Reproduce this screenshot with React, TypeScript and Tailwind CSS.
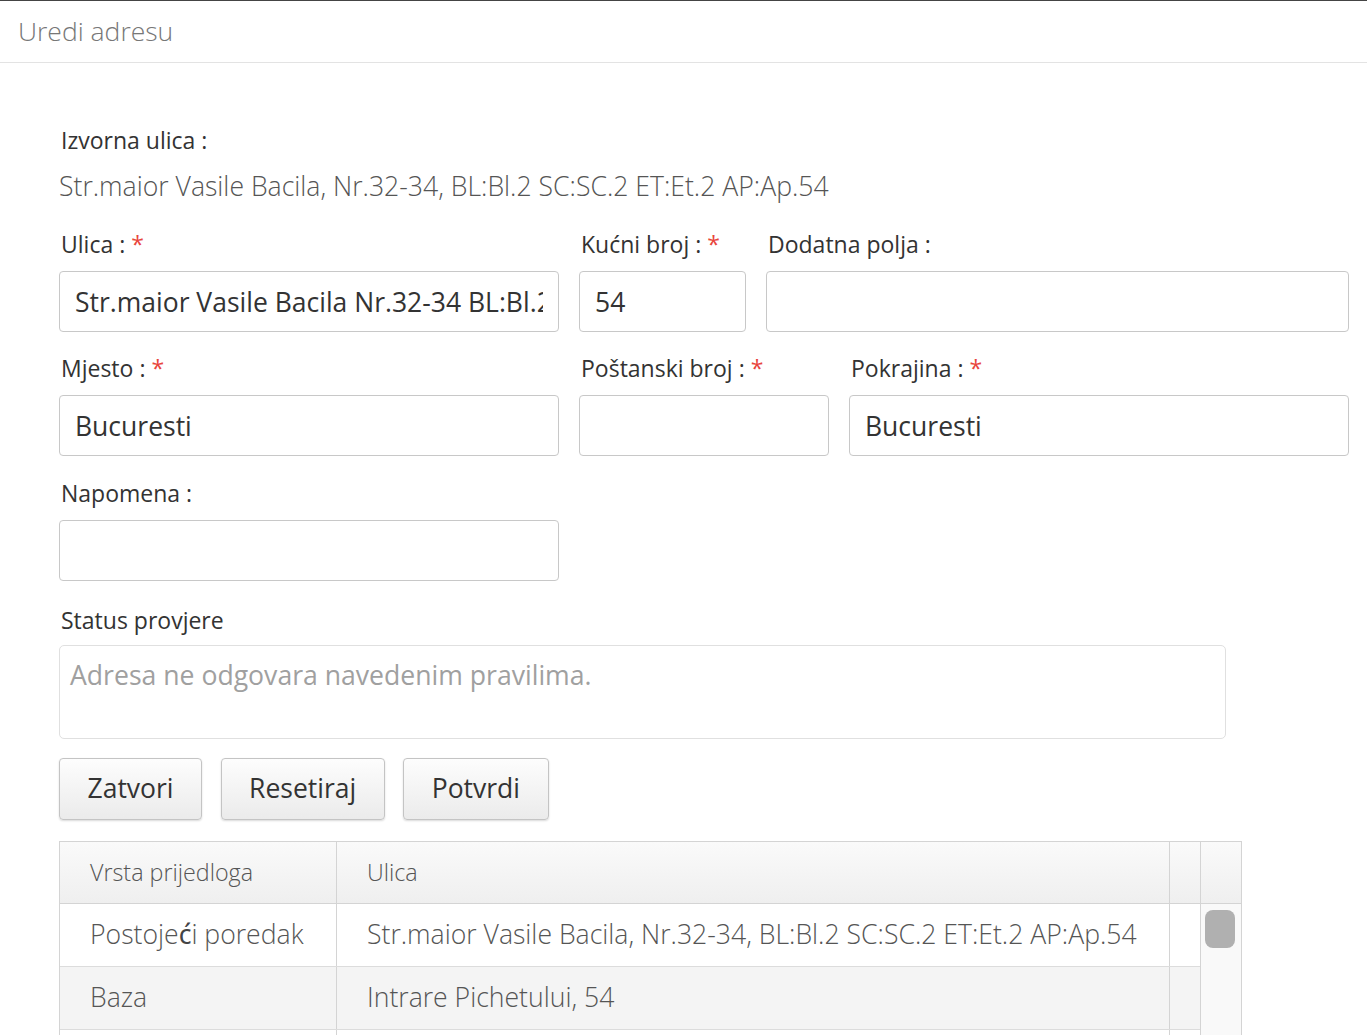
import React from 'react';

const Req: React.FC = () => <span className="text-[#e8453c]">*</span>;

const Label: React.FC<{ text: string; required?: boolean }> = ({ text, required }) => (
  <div className="h-[30px] leading-[30px] text-[23px] text-[#333] pl-[2px] whitespace-nowrap">
    {text} {required && <Req />}
  </div>
);

const Field: React.FC<{ label: string; required?: boolean; value?: string; width: string }> = ({ label, required, value = '', width }) => (
  <div className={`flex flex-col ${width}`}>
    <Label text={label} required={required} />
    <input
      readOnly
      defaultValue={value}
      className="mt-[12px] h-[61px] w-full rounded-[4px] border border-[#c8c8c8] bg-white px-[15px] text-[26.5px] text-[#333] outline-none font-['Open_Sans',sans-serif]"
    />
  </div>
);

const Btn: React.FC<{ children: React.ReactNode }> = ({ children }) => (
  <button className="h-[62px] rounded-[4px] border border-[#c4c4c4] bg-gradient-to-b from-[#fdfdfd] to-[#ebebeb] px-[27.5px] text-[26.5px] text-[#333] shadow-[0_1px_2px_rgba(0,0,0,0.15)]">
    {children}
  </button>
);

const rows = [
  { type: <>Postoje<span className="font-['Noto_Sans',sans-serif] font-normal text-[#444]">ć</span>i poredak</>, street: 'Str.maior Vasile Bacila, Nr.32-34, BL:Bl.2 SC:SC.2 ET:Et.2 AP:Ap.54', bg: 'bg-white' },
  { type: <>Baza</>, street: 'Intrare Pichetului, 54', bg: 'bg-[#f4f4f4]' },
  { type: <></>, street: '', bg: 'bg-white' },
];

export default function App() {
  return (
    <div className="min-h-screen bg-white font-['Open_Sans',sans-serif]">
      <header className="h-[63px] border-t border-b border-t-[#444] border-b-[#e3e3e3] pl-[18px] pt-[10px]">
        <h1 className="text-[26.5px] font-light leading-[40px] text-[#777]">Uredi adresu</h1>
      </header>

      <main className="pl-[59px] pr-[18px] pt-[62px]">
        <div className="h-[30px] leading-[30px] text-[23px] text-[#333] pl-[2px]">Izvorna ulica :</div>
        <div className="mt-[13px] h-[36px] leading-[36px] text-[26.6px] font-light text-[#555]">
          Str.maior Vasile Bacila, Nr.32-34, BL:Bl.2 SC:SC.2 ET:Et.2 AP:Ap.54
        </div>

        <div className="mt-[25px] flex gap-[20px]">
          <Field width="w-[500px]" label="Ulica :" required value="Str.maior Vasile Bacila Nr.32-34 BL:Bl.2 SC:SC.2" />
          <Field width="w-[167px]" label="Kućni broj :" required value="54" />
          <Field width="flex-1" label="Dodatna polja :" />
        </div>

        <div className="mt-[21px] flex gap-[20px]">
          <Field width="w-[500px]" label="Mjesto :" required value="Bucuresti" />
          <Field width="w-[250px]" label="Poštanski broj :" required />
          <Field width="flex-1" label="Pokrajina :" required value="Bucuresti" />
        </div>

        <div className="mt-[22px] flex">
          <Field width="w-[500px]" label="Napomena :" />
        </div>

        <div className="mt-[24px]">
          <Label text="Status provjere" />
          <div className="mt-[10px] h-[94px] w-[1167px] rounded-[5px] border border-[#e0e0e0] px-[10px] pt-[11px] text-[26.6px] leading-[36px] text-[#a0a0a0]">
            Adresa ne odgovara navedenim pravilima.
          </div>
        </div>

        <div className="mt-[19px] flex gap-[18.5px]">
          <Btn>Zatvori</Btn>
          <Btn>Resetiraj</Btn>
          <Btn>Potvrdi</Btn>
        </div>

        <div className="mt-[21px] flex w-[1183px] border border-[#d4d4d4]">
          <div className="flex-1">
            <div className="grid h-[62px] grid-cols-[277px_833px_1fr] border-b border-[#d4d4d4] bg-gradient-to-b from-[#fafafa] to-[#efefef] text-[23.3px] font-light text-[#555]">
              <div className="flex items-center border-r border-[#d4d4d4] pl-[30px]">Vrsta prijedloga</div>
              <div className="flex items-center border-r border-[#d4d4d4] pl-[30px]">Ulica</div>
              <div />
            </div>
            {rows.map((r, i) => (
              <div key={i} className={`grid h-[63px] grid-cols-[277px_833px_1fr] border-b border-[#dcdcdc] text-[26.6px] font-light text-[#555] ${r.bg}`}>
                <div className="flex items-center border-r border-[#d4d4d4] pl-[30px] whitespace-nowrap">{r.type}</div>
                <div className="flex items-center border-r border-[#d4d4d4] pl-[30px] whitespace-nowrap">{r.street}</div>
                <div />
              </div>
            ))}
          </div>
          <div className="w-[41px] border-l border-[#d4d4d4] bg-[#f9f9f9]">
            <div className="h-[62px] border-b border-[#d4d4d4] bg-gradient-to-b from-[#fafafa] to-[#efefef]" />
            <div className="px-[4px] pt-[6px]">
              <div className="h-[38px] w-[30px] rounded-[8px] bg-[#b0b0b0]" />
            </div>
          </div>
        </div>
      </main>
    </div>
  );
}
